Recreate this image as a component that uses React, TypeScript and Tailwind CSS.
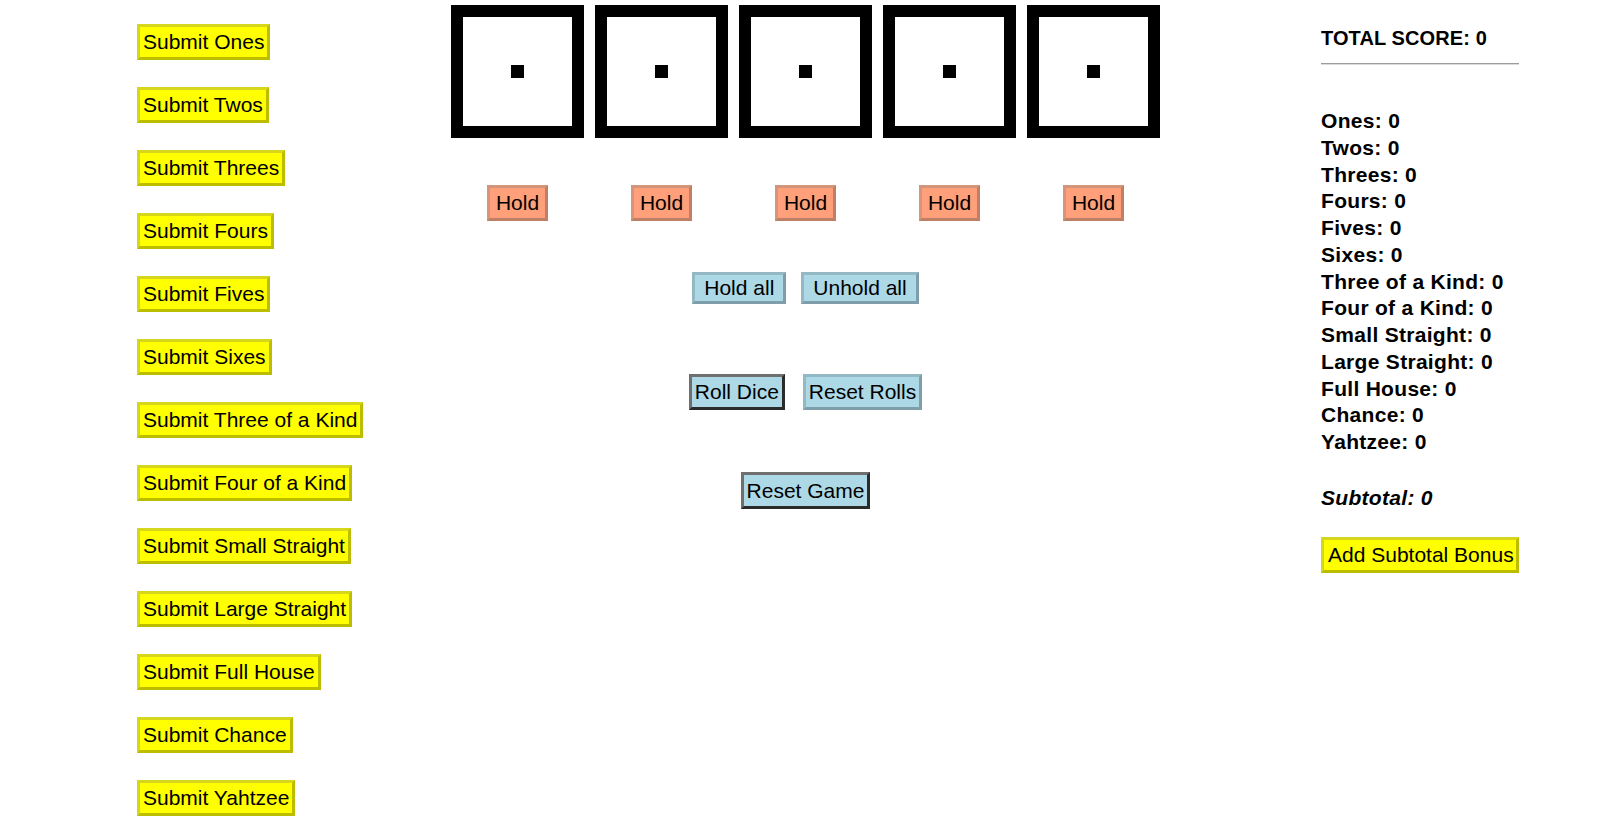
// Imports
import { useState } from "react";

// Categories
const categories = [
    "Ones",
    "Twos",
    "Threes",
    "Fours",
    "Fives",
    "Sixes",
    "Three of a Kind",
    "Four of a Kind",
    "Small Straight",
    "Large Straight",
    "Full House",
    "Chance",
    "Yahtzee",
];

const yellowBtn =
    "h-[36px] px-[3px] bg-[#ffff00] border-[3px] border-t-[#d6d61c] border-l-[#d6d61c] border-b-[#bdbd00] border-r-[#bdbd00] text-[21px] leading-[24px] whitespace-nowrap cursor-pointer";
const blueBtn =
    "bg-[#add8e6] border-[3px] border-t-[#94b8c4] border-l-[#94b8c4] border-b-[#7e9ea9] border-r-[#7e9ea9] text-[21px] leading-[24px] whitespace-nowrap cursor-pointer";
const darkBtn =
    "bg-[#add8e6] border-[3px] border-t-[#6f6f6f] border-l-[#6f6f6f] border-b-[#2b2b2b] border-r-[#2b2b2b] text-[21px] leading-[24px] whitespace-nowrap cursor-pointer";

// Die
function Die() {
    return (
        <div className="w-[133px] h-[133px] border-[12px] border-black bg-white flex items-center justify-center">
            <div className="w-[13px] h-[13px] bg-black" />
        </div>
    );
}

export default function App() {
    const [scores] = useState<number[]>(categories.map(() => 0));
    const total = scores.reduce((a, b) => a + b, 0);

    return (
        <div className="flex min-h-screen bg-white text-black font-['Liberation_Sans',Arial,sans-serif]">
            {/* Submit column */}
            <div className="w-[451px] shrink-0 pl-[137px] pt-[24px] flex flex-col items-start gap-[27px]">
                {categories.map((c) => (
                    <button key={c} className={yellowBtn}>
                        Submit {c}
                    </button>
                ))}
            </div>

            {/* Dice + controls */}
            <div className="w-[709px] shrink-0 pt-[5px] flex flex-col items-center">
                <div className="flex gap-[11px]">
                    {[0, 1, 2, 3, 4].map((i) => (
                        <Die key={i} />
                    ))}
                </div>

                <div className="flex gap-[11px] mt-[47px]">
                    {[0, 1, 2, 3, 4].map((i) => (
                        <div key={i} className="w-[133px] flex justify-center">
                            <button className="h-[36px] px-[5.5px] bg-[#ffa07a] border-[3px] border-t-[#d4967a] border-l-[#d4967a] border-b-[#bf7f66] border-r-[#bf7f66] text-[21px] leading-[24px] cursor-pointer">
                                Hold
                            </button>
                        </div>
                    ))}
                </div>

                <div className="flex gap-[15px] mt-[51px]">
                    <button className={`${blueBtn} h-[32px] px-[9px]`}>Hold all</button>
                    <button className={`${blueBtn} h-[32px] px-[9px]`}>Unhold all</button>
                </div>

                <div className="flex gap-[18px] mt-[70px]">
                    <button className={`${darkBtn} h-[36px] px-[3px]`}>Roll Dice</button>
                    <button className={`${blueBtn} h-[36px] px-[3px]`}>Reset Rolls</button>
                </div>

                <div className="mt-[62px]">
                    <button className={`${darkBtn} h-[37px] px-[3px]`}>Reset Game</button>
                </div>
            </div>

            {/* Score panel */}
            <div className="ml-[161px] w-[198px] shrink-0 pt-[27px] font-bold">
                <p className="text-[20px] leading-[23px] tracking-[0.1px] whitespace-nowrap">TOTAL SCORE: {total}</p>
                <div className="mt-[13px] h-[2px] border-t border-t-[#9c9c9c] border-b border-b-[#dcdcdc]" />

                <div className="mt-[43px] flex flex-col">
                    {categories.map((c, i) => (
                        <p key={c} className="text-[21px] leading-[26.75px] tracking-[0.3px] whitespace-nowrap">
                            {c}: {scores[i]}
                        </p>
                    ))}
                </div>

                <p className="mt-[29px] text-[21px] leading-[26.75px] tracking-[0.3px] italic">Subtotal: {total}</p>

                <button className={`${yellowBtn} mt-[25.5px] w-[198px] font-normal text-left pl-[4px]`}>
                    Add Subtotal Bonus
                </button>
            </div>
        </div>
    );
}
